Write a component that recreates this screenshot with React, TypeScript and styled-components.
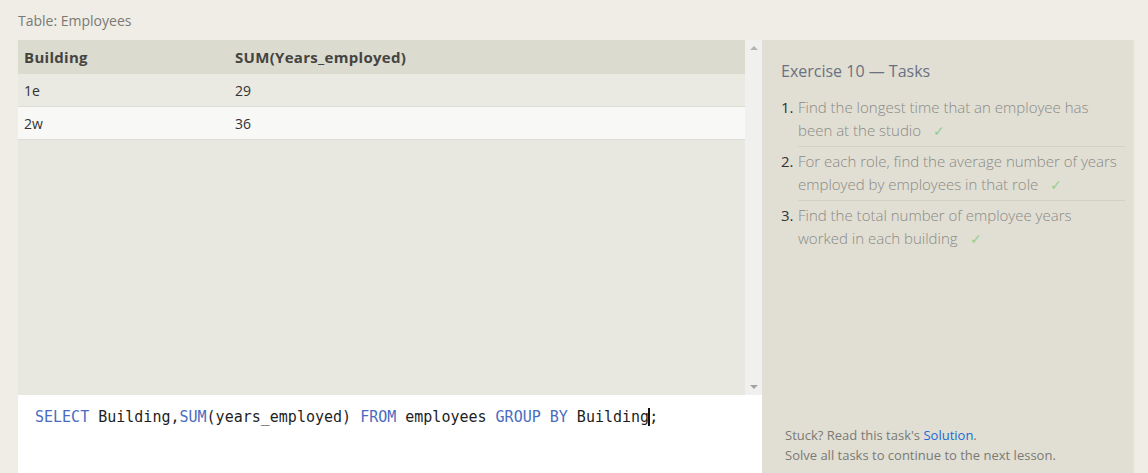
import React, { FunctionComponent } from "react";
import styled, { createGlobalStyle } from "styled-components";

const GlobalStyle = createGlobalStyle`
  html, body {
    margin: 0;
    padding: 0;
    background: #efede6;
    font-family: "Open Sans", "Noto Sans", sans-serif;
    overflow: hidden;
  }
`;

const Page = styled.div`
  width: 1148px;
  height: 473px;
  padding: 0 11px 0 18px;
  box-sizing: border-box;
  display: flex;
  flex-direction: column;
`;

const Caption = styled.div`
  height: 40px;
  padding-top: 10px;
  box-sizing: border-box;
  font-size: 14px;
  line-height: 22px;
  color: #7a7a74;
`;

const Workspace = styled.div`
  flex: 1;
  display: flex;
  min-height: 0;
`;

const LeftColumn = styled.div`
  width: 744px;
  display: flex;
  flex-direction: column;
`;

const ResultArea = styled.div`
  height: 355px;
  display: flex;
  background: #e9e8e0;
`;

const TableWrap = styled.div`
  flex: 1;
`;

const Table = styled.table`
  width: 100%;
  border-collapse: collapse;
  font-size: 14px;
`;

const HeadCell = styled.th<{ $width?: number }>`
  text-align: left;
  font-weight: 700;
  font-size: 15px;
  color: #444441;
  background: #dcdbd0;
  height: 34px;
  padding: 0 6px;
  letter-spacing: 0.3px;
  width: ${({ $width }) => ($width ? `${$width}px` : "auto")};
`;

const Row = styled.tr<{ $light?: boolean }>`
  background: ${({ $light }) => ($light ? "#f8f8f7" : "#eae9e2")};
  border-bottom: 1px solid #dcdcd5;
`;

const Cell = styled.td`
  height: 31px;
  padding: 1px 6px 0;
  color: #333;
`;

const Scrollbar = styled.div`
  width: 17px;
  background: #f0f0ef;
  display: flex;
  flex-direction: column;
  justify-content: space-between;
  align-items: center;
  padding: 6px 0 6px;
  box-sizing: border-box;
`;

const Arrow = styled.div<{ $down?: boolean }>`
  width: 0;
  height: 0;
  border-left: 4px solid transparent;
  border-right: 4px solid transparent;
  ${({ $down }) =>
    $down ? "border-top: 4px solid #a3a3a3;" : "border-bottom: 4px solid #b4b4b2;"}
`;

const Editor = styled.div`
  flex: 1;
  background: #ffffff;
  padding: 11px 17px;
  font-family: "DejaVu Sans Mono", "Liberation Mono", monospace;
  font-size: 15px;
  line-height: 22px;
  color: #1e1e1e;
  white-space: pre;
`;

const Keyword = styled.span`
  color: #4a6cc0;
`;

const Caret = styled.span`
  border-left: 2px solid #111;
  margin-left: -1px;
  margin-right: -1px;
`;

const TaskPanel = styled.div`
  width: 373px;
  background: #e1dfd4;
  border-right: 2px solid #e8e6de;
  display: flex;
  flex-direction: column;
  justify-content: space-between;
  padding: 20px 8px 8px 19px;
  box-sizing: border-box;
`;

const TaskTitle = styled.div`
  font-size: 16px;
  line-height: 22px;
  color: #6b7082;
  margin-bottom: 11px;
`;

const TaskList = styled.ol`
  margin: 0;
  padding: 0;
  list-style: none;
`;

const TaskItem = styled.li`
  display: flex;
  font-size: 15px;
  line-height: 23px;
  font-weight: 300;
`;

const TaskNumber = styled.span`
  width: 17px;
  flex: none;
  color: #333;
  font-weight: 400;
  padding-top: 3px;
`;

const TaskBody = styled.div<{ $last?: boolean }>`
  flex: 1;
  color: #8a8a86;
  padding: 3px 0 3px;
  border-bottom: ${({ $last }) => ($last ? "none" : "1px solid #d3d2c8")};
`;

const Check = styled.span`
  color: #8fcf8f;
  margin-left: 12px;
  font-family: "DejaVu Sans", sans-serif;
  font-size: 14px;
`;

const Footer = styled.div`
  font-size: 13px;
  line-height: 20px;
  color: #7b7a75;
  padding-left: 4px;
`;

const Link = styled.a`
  color: #1a6ad6;
  text-decoration: none;
`;

const tasks = [
  "Find the longest time that an employee has been at the studio",
  "For each role, find the average number of years employed by employees in that role",
  "Find the total number of employee years worked in each building",
];

const rows = [
  { building: "1e", total: 29 },
  { building: "2w", total: 36 },
];

const App: FunctionComponent = () => {
  return (
    <Page>
      <GlobalStyle />
      <Caption>Table: Employees</Caption>
      <Workspace>
        <LeftColumn>
          <ResultArea>
            <TableWrap>
              <Table>
                <thead>
                  <tr>
                    <HeadCell $width={199}>Building</HeadCell>
                    <HeadCell>SUM(Years_employed)</HeadCell>
                  </tr>
                </thead>
                <tbody>
                  {rows.map((r, i) => (
                    <Row key={r.building} $light={i % 2 === 1}>
                      <Cell>{r.building}</Cell>
                      <Cell>{r.total}</Cell>
                    </Row>
                  ))}
                </tbody>
              </Table>
            </TableWrap>
            <Scrollbar>
              <Arrow />
              <Arrow $down />
            </Scrollbar>
          </ResultArea>
          <Editor>
            <Keyword>SELECT</Keyword> Building,<Keyword>SUM</Keyword>(years_employed){" "}
            <Keyword>FROM</Keyword> employees <Keyword>GROUP BY</Keyword> Building
            <Caret />;
          </Editor>
        </LeftColumn>
        <TaskPanel>
          <div>
            <TaskTitle>Exercise 10 — Tasks</TaskTitle>
            <TaskList>
              {tasks.map((t, i) => (
                <TaskItem key={t}>
                  <TaskNumber>{i + 1}.</TaskNumber>
                  <TaskBody $last={i === tasks.length - 1}>
                    {t}
                    <Check>✓</Check>
                  </TaskBody>
                </TaskItem>
              ))}
            </TaskList>
          </div>
          <Footer>
            Stuck? Read this task's <Link>Solution</Link>.
            <br />
            Solve all tasks to continue to the next lesson.
          </Footer>
        </TaskPanel>
      </Workspace>
    </Page>
  );
};

export default App;
